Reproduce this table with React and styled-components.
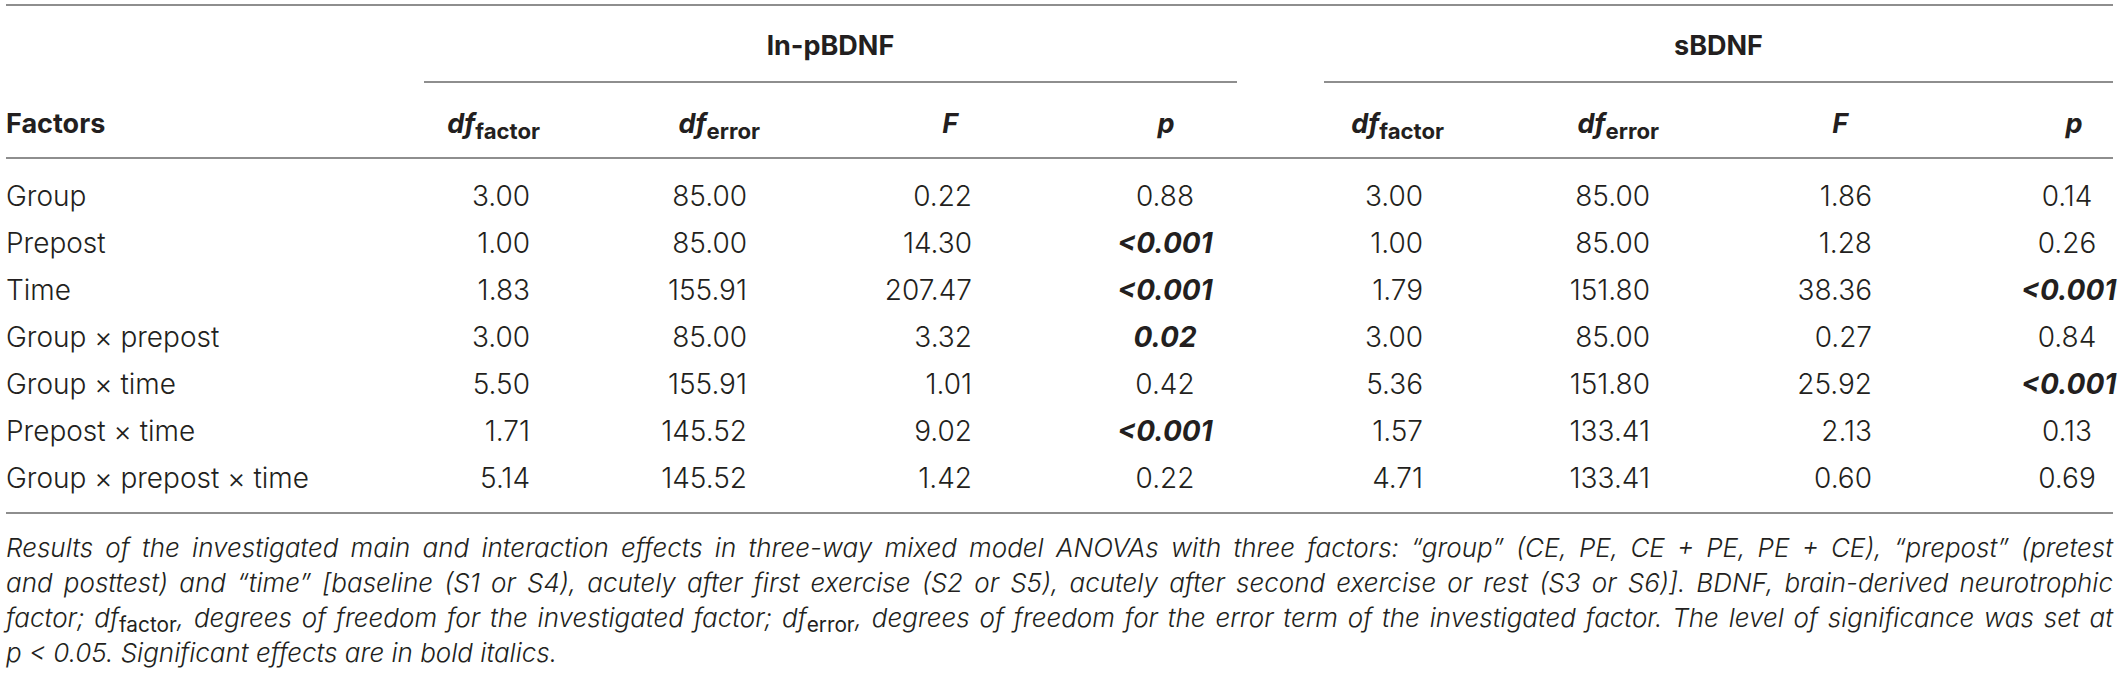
import React from "react";
import styled, { createGlobalStyle } from "styled-components";

const GlobalStyle = createGlobalStyle`
  body {
    margin: 0;
    background: #fff;
    color: #231f20;
    font-family: Inter, "Liberation Sans", Arial, sans-serif;
  }
`;

const GRID = "418px 136px 230px 210px 280px 180px 230px 250px 173px";

const Table = styled.div`
  margin: 4px 0 0 6px;
  width: 2107px;
  border-top: 2px solid #8e8e8e;
`;

const SpanRow = styled.div`
  display: grid;
  grid-template-columns: ${GRID};
`;

const Spanner = styled.div`
  grid-column: ${(p) => p.$cols};
  margin: ${(p) => p.$margin};
  height: 77px;
  box-sizing: border-box;
  border-bottom: 2px solid #8e8e8e;
  display: flex;
  align-items: center;
  justify-content: center;
  font-weight: 700;
  font-size: 27px;
  padding-top: 4px;
`;

const HeadRow = styled.div`
  display: grid;
  grid-template-columns: ${GRID};
  height: 76px;
  box-sizing: border-box;
  border-bottom: 2px solid #8e8e8e;
  align-items: center;
  padding-top: 6px;
  font-weight: 700;
  font-size: 27px;
`;

const Body = styled.div`
  padding: 13px 0 11px;
  border-bottom: 2px solid #8e8e8e;
`;

const Row = styled.div`
  display: grid;
  grid-template-columns: ${GRID};
  height: 47px;
  align-items: center;
  font-weight: 300;
  font-size: 28px;
`;

const Cell = styled.div`
  text-align: ${(p) => p.$align || "left"};
  padding-left: ${(p) => p.$pl || 0}px;
  padding-right: ${(p) => p.$pr || 0}px;
  white-space: nowrap;
`;

const Sig = styled.span`
  font-weight: 700;
  font-style: italic;
`;

const Stat = styled.span`
  font-style: italic;
`;

const Sub = styled.sub`
  font-style: normal;
  font-size: 0.82em;
  vertical-align: -0.28em;
  line-height: 0;
`;

const Caption = styled.div`
  padding-top: 16px;
  font-style: italic;
  font-weight: 300;
  font-size: 26px;
  line-height: 35px;
  color: #231f20;
`;

const CaptionLine = styled.div`
  text-align: ${(p) => (p.$last ? "left" : "justify")};
  text-align-last: ${(p) => (p.$last ? "left" : "justify")};
`;

const CapSub = styled.sub`
  font-style: normal;
  font-weight: 400;
  font-size: 0.8em;
  vertical-align: -0.25em;
  line-height: 0;
`;

const cols = [
  { align: "left", head: {}, data: {} },
  { align: "right", head: { pr: 20 }, data: { pr: 30 } },
  { align: "right", head: { pr: 30 }, data: { pr: 43 } },
  { align: "right", head: { pr: 42 }, data: { pr: 28 } },
  { align: "center", head: { pl: 52 }, data: { pl: 50 } },
  { align: "right", head: { pr: 16 }, data: { pr: 37 } },
  { align: "right", head: { pr: 31 }, data: { pr: 40 } },
  { align: "right", head: { pr: 92 }, data: { pr: 68 } },
  { align: "center", head: { pl: 95 }, data: { pl: 81 } },
];

const DfFactor = () => (
  <>
    <Stat>df</Stat>
    <Sub>factor</Sub>
  </>
);

const DfError = () => (
  <>
    <Stat>df</Stat>
    <Sub>error</Sub>
  </>
);

const headers = [
  "Factors",
  <DfFactor />,
  <DfError />,
  <Stat>F</Stat>,
  <Stat>p</Stat>,
  <DfFactor />,
  <DfError />,
  <Stat>F</Stat>,
  <Stat>p</Stat>,
];

const S = (v) => ({ v, sig: true });

const rows = [
  ["Group", "3.00", "85.00", "0.22", "0.88", "3.00", "85.00", "1.86", "0.14"],
  ["Prepost", "1.00", "85.00", "14.30", S("<0.001"), "1.00", "85.00", "1.28", "0.26"],
  ["Time", "1.83", "155.91", "207.47", S("<0.001"), "1.79", "151.80", "38.36", S("<0.001")],
  ["Group × prepost", "3.00", "85.00", "3.32", S("0.02"), "3.00", "85.00", "0.27", "0.84"],
  ["Group × time", "5.50", "155.91", "1.01", "0.42", "5.36", "151.80", "25.92", S("<0.001")],
  ["Prepost × time", "1.71", "145.52", "9.02", S("<0.001"), "1.57", "133.41", "2.13", "0.13"],
  ["Group × prepost × time", "5.14", "145.52", "1.42", "0.22", "4.71", "133.41", "0.60", "0.69"],
];

const App = () => {
  return (
    <>
      <GlobalStyle />
      <Table>
        <SpanRow>
          <Spanner $cols="2 / 6" $margin="0 43px 0 0">
            ln-pBDNF
          </Spanner>
          <Spanner $cols="6 / 10" $margin="0 0 0 44px">
            sBDNF
          </Spanner>
        </SpanRow>
        <HeadRow>
          {headers.map((h, i) => (
            <Cell key={i} $align={cols[i].align} $pl={cols[i].head.pl} $pr={cols[i].head.pr}>
              {h}
            </Cell>
          ))}
        </HeadRow>
        <Body>
          {rows.map((row, r) => (
            <Row key={r}>
              {row.map((c, i) => (
                <Cell key={i} $align={cols[i].align} $pl={cols[i].data.pl} $pr={cols[i].data.pr}>
                  {typeof c === "object" ? <Sig>{c.v}</Sig> : c}
                </Cell>
              ))}
            </Row>
          ))}
        </Body>
        <Caption>
          <CaptionLine>
            Results of the investigated main and interaction effects in three-way mixed model ANOVAs with three factors: “group” (CE, PE, CE + PE, PE + CE), “prepost” (pretest
          </CaptionLine>
          <CaptionLine>
            and posttest) and “time” [baseline (S1 or S4), acutely after first exercise (S2 or S5), acutely after second exercise or rest (S3 or S6)]. BDNF, brain-derived neurotrophic
          </CaptionLine>
          <CaptionLine>
            factor; df<CapSub>factor</CapSub>, degrees of freedom for the investigated factor; df<CapSub>error</CapSub>, degrees of freedom for the error term of the investigated factor. The level of significance was set at
          </CaptionLine>
          <CaptionLine $last>p &lt; 0.05. Significant effects are in bold italics.</CaptionLine>
        </Caption>
      </Table>
    </>
  );
};

export default App;
